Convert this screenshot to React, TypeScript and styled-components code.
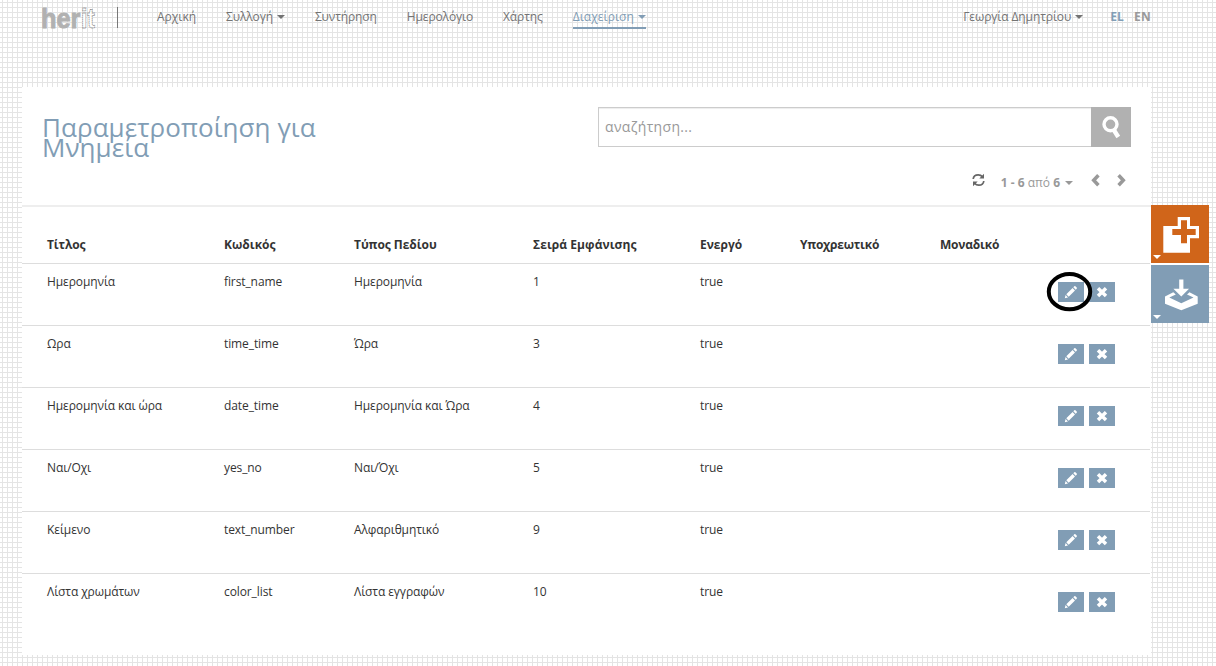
import React from "react";
import styled, { createGlobalStyle, css } from "styled-components";

const GlobalStyle = createGlobalStyle`
  *, *::before, *::after { box-sizing: border-box; }
  body {
    margin: 0;
    height: 666px;
    overflow: hidden;
    font: 12px/20px "Open Sans", "Noto Sans", sans-serif;
    color: #333;
    background-color: #fff;
    background-image:
      linear-gradient(to right, transparent 2px, #e4e4e4 2px, #e4e4e4 3px, transparent 3px),
      linear-gradient(to bottom, transparent 2px, #e4e4e4 2px, #e4e4e4 3px, transparent 3px);
    background-size: 5px 5px;
  }
`;

const BLUE = "#819db5";

const Page = styled.div`
  height: 666px;
  display: flex;
  flex-direction: column;
`;

const Header = styled.header`
  height: 87px;
  display: flex;
  align-items: flex-start;
  padding: 7px 65px 0 42px;
`;

const Logo = styled.svg`
  width: 54px;
  height: 22px;
  flex: none;
  overflow: visible;
  font-family: "Liberation Sans", Arial, sans-serif;
  font-weight: 700;
`;

const Divider = styled.div`
  width: 1px;
  height: 21px;
  margin-left: 21px;
  background: #777;
`;

const Nav = styled.nav`
  display: flex;
  gap: 30px;
  margin-left: 39px;
`;

const NavLink = styled.a<{ $active?: boolean; $tracking?: number }>`
  display: flex;
  align-items: center;
  height: 22px;
  line-height: 20px;
  padding-bottom: 2px;
  white-space: nowrap;
  letter-spacing: ${(p) => p.$tracking ?? -0.12}px;
  color: ${(p) => (p.$active ? BLUE : "#737373")};
  ${(p) => p.$active && css`border-bottom: 2px solid ${BLUE}; padding-bottom: 0;`}
`;

const Caret = styled.span`
  margin-left: 4px;
  border: 4px solid transparent;
  border-top-color: currentColor;
  border-bottom: 0;
`;

const UserArea = styled.div`
  display: flex;
  margin-left: auto;
`;

const Language = styled.a<{ $selected?: boolean; $gap: number }>`
  margin-left: ${(p) => p.$gap}px;
  font-weight: 700;
  letter-spacing: 0.2px;
  color: ${(p) => (p.$selected ? BLUE : "#999")};
`;

const Body = styled.main`
  display: flex;
  align-items: flex-start;
  padding-left: 22px;
`;

const Panel = styled.section`
  width: 1129px;
  height: 568px;
  background: #fff;
`;

const PanelHead = styled.div`
  height: 120px;
  display: flex;
  justify-content: space-between;
  padding: 20px 20px 0;
  border-bottom: 2px solid #eee;
`;

const Title = styled.h1`
  width: 340px;
  margin: 10px 0 0;
  font-size: 26px;
  font-weight: 400;
  line-height: 20px;
  letter-spacing: 0.07px;
  color: ${BLUE};
`;

const Tools = styled.div`
  width: 533px;
`;

const Search = styled.div`
  display: flex;
  height: 40px;
`;

const SearchInput = styled.input`
  flex: 1;
  min-width: 0;
  padding: 0 6px;
  border: 1px solid #ccc;
  border-right: 0;
  box-shadow: inset 0 1px 1px rgba(0, 0, 0, 0.075);
  font: 14px/20px "Open Sans", "Noto Sans", sans-serif;
  letter-spacing: 0.33px;
  outline: 0;
  &::placeholder { color: #999; opacity: 1; }
`;

const SearchButton = styled.button`
  width: 40px;
  height: 40px;
  padding: 0;
  border: 0;
  background: #b1b1b1;
  svg { display: block; }
`;

const Pager = styled.div`
  display: flex;
  justify-content: flex-end;
  height: 20px;
  margin-top: 26px;
  padding-right: 5px;
  color: #999;
`;

const PagerIcon = styled.svg<{ $left: number }>`
  flex: none;
  margin: 0 0 0 ${(p) => p.$left}px;
`;

const PagerText = styled.span`
  display: flex;
  align-items: center;
  margin-left: 16px;
  white-space: pre;
  ${Caret} { margin-left: 5px; }
`;

const Table = styled.table`
  width: 1128px;
  margin-top: 18px;
  table-layout: fixed;
  border-collapse: separate;
  border-spacing: 0;
`;

const HeadCell = styled.th<{ $tracking: number }>`
  height: 39px;
  padding: 10px 0 8px;
  border-bottom: 1px solid #ddd;
  text-align: left;
  vertical-align: top;
  font-weight: 700;
  letter-spacing: ${(p) => p.$tracking}px;
  &:first-child { padding-left: 25px; }
`;

const Row = styled.tr`
  height: 62px;
  &:not(:last-child) td { border-bottom: 1px solid #ddd; }
`;

const Cell = styled.td`
  padding: 8px 0;
  vertical-align: top;
  letter-spacing: -0.1px;
  &:first-child { padding-left: 25px; }
`;

const Actions = styled.div`
  display: flex;
  gap: 5px;
  margin-top: 10px;
`;

const ActionButton = styled.button`
  width: 26px;
  height: 20px;
  padding: 0;
  border: 0;
  background: ${BLUE};
  svg { display: block; }
`;

const EditSlot = styled.div`
  position: relative;
  display: flex;
`;

const Ring = styled.svg`
  position: absolute;
  left: -12px;
  top: -11px;
  z-index: 1;
`;

const Side = styled.aside`
  display: flex;
  flex-direction: column;
  gap: 2px;
  margin-top: 118px;
  background: #fff;
`;

const SideButton = styled.button<{ $color: string }>`
  width: 58px;
  height: 58px;
  padding: 0;
  border: 0;
  background: ${(p) => p.$color};
  svg { display: block; }
`;

const nav = [
  { label: "Αρχική", tracking: 0 },
  { label: "Συλλογή", menu: true },
  { label: "Συντήρηση" },
  { label: "Ημερολόγιο" },
  { label: "Χάρτης" },
  { label: "Διαχείριση", menu: true, active: true, tracking: 0.06 },
];

const columns = [
  { label: "Τίτλος", width: 202, tracking: -0.12 },
  { label: "Κωδικός", width: 130, tracking: 0 },
  { label: "Τύπος Πεδίου", width: 179, tracking: -0.04 },
  { label: "Σειρά Εμφάνισης", width: 167, tracking: 0.06 },
  { label: "Ενεργό", width: 100, tracking: 0 },
  { label: "Υποχρεωτικό", width: 140, tracking: -0.22 },
  { label: "Μοναδικό", width: 118, tracking: -0.2 },
  { label: "", width: 92, tracking: 0 },
];

const rows = [
  ["Ημερομηνία", "first_name", "Ημερομηνία", "1"],
  ["Ωρα", "time_time", "Ώρα", "3"],
  ["Ημερομηνία και ώρα", "date_time", "Ημερομηνία και Ώρα", "4"],
  ["Ναι/Οχι", "yes_no", "Ναι/Όχι", "5"],
  ["Κείμενο", "text_number", "Αλφαριθμητικό", "9"],
  ["Λίστα χρωμάτων", "color_list", "Λίστα εγγραφών", "10"],
];

const Pencil = () => (
  <svg width="26" height="20" viewBox="0 0 26 20" fill="#fff">
    <path d="M6.8 16.2l.8-3.200 2.400 2.400zM8.300 12.300l6.300-6.300 2.400 2.400-6.300 6.300zM15.300 5.300l1-1q.6-.5 1.100 0l1.300 1.300q.5.500 0 1.100l-1 1z" />
  </svg>
);

const Cross = () => (
  <svg width="26" height="20" viewBox="0 0 26 20">
    <path d="M9 6.200l8 7.800M17 6.200l-8 7.800" stroke="#fff" strokeWidth="3.500" />
  </svg>
);

export default function App() {
  return (
    <Page>
      <GlobalStyle />
      <Header>
        <Logo viewBox="0 0 54 22">
          <text x="-1" y="20.500" fontSize="27" textLength="39.500" lengthAdjust="spacingAndGlyphs" fill="#b1b1b1" stroke="#b1b1b1" strokeWidth=".9">her</text>
          <text x="39" y="20.500" fontSize="27" textLength="14" lengthAdjust="spacingAndGlyphs" fill="#fff" stroke="#8c8c8c" strokeWidth=".8" strokeDasharray="1.500 .5">it</text>
        </Logo>
        <Divider />
        <Nav>
          {nav.map((n) => (
            <NavLink key={n.label} $active={n.active} $tracking={n.tracking}>
              {n.label}
              {n.menu && <Caret />}
            </NavLink>
          ))}
        </Nav>
        <UserArea>
          <NavLink $tracking={-0.1}>Γεωργία Δημητρίου<Caret /></NavLink>
          <Language $selected $gap={27}>EL</Language>
          <Language $gap={10}>EN</Language>
        </UserArea>
      </Header>
      <Body>
        <Panel>
          <PanelHead>
            <Title>Παραμετροποίηση για Μνημεία</Title>
            <Tools>
              <Search>
                <SearchInput placeholder="αναζήτηση..." />
                <SearchButton aria-label="Αναζήτηση">
                  <svg width="40" height="40" fill="none" stroke="#fff">
                    <circle cx="19.500" cy="17.300" r="6.500" strokeWidth="3.400" />
                    <path d="M22.500 22.500l4.800 7.500" strokeWidth="4.400" />
                  </svg>
                </SearchButton>
              </Search>
              <Pager>
                <PagerIcon $left={0} width="13" height="14" viewBox="0 0 13 14" fill="none" stroke="#666" strokeWidth="1.700">
                  <path d="M1.200 6C1.500 3.200 3.800 1.800 6.200 1.800c2 0 3.300.8 4.200 2M11.800 8c-.3 2.800-2.600 4.200-5 4.200-2 0-3.300-.8-4.200-2" />
                  <path d="M12 .8v4.700H7.300zM1 13.200V8.500h4.700z" fill="#666" stroke="none" />
                </PagerIcon>
                <PagerText><b>1 - 6</b> από <b>6</b><Caret /></PagerText>
                <PagerIcon $left={18} width="9" height="14" viewBox="0 0 9 14" fill="none" stroke="#999" strokeWidth="3.500">
                  <path d="M7.400 2.200L2.700 7.200 7.400 12.200" />
                </PagerIcon>
                <PagerIcon $left={17} width="9" height="14" viewBox="0 0 9 14" fill="none" stroke="#999" strokeWidth="3.500">
                  <path d="M1.600 2.200L6.300 7.200 1.600 12.200" />
                </PagerIcon>
              </Pager>
            </Tools>
          </PanelHead>
          <Table>
            <colgroup>
              {columns.map((c, i) => <col key={i} width={c.width} />)}
            </colgroup>
            <thead>
              <tr>{columns.map((c, i) => <HeadCell key={i} $tracking={c.tracking}>{c.label}</HeadCell>)}</tr>
            </thead>
            <tbody>
              {rows.map((r, i) => (
                <Row key={r[1]}>
                  {r.map((v, j) => <Cell key={j}>{v}</Cell>)}
                  <Cell>true</Cell>
                  <Cell />
                  <Cell />
                  <Cell>
                    <Actions>
                      <EditSlot>
                        <ActionButton aria-label="Επεξεργασία"><Pencil /></ActionButton>
                        {i === 0 && (
                          <Ring width="47" height="41" fill="none">
                            <ellipse cx="23.500" cy="20.700" rx="20.700" ry="17.600" stroke="#000" strokeWidth="4" />
                          </Ring>
                        )}
                      </EditSlot>
                      <ActionButton aria-label="Διαγραφή"><Cross /></ActionButton>
                    </Actions>
                  </Cell>
                </Row>
              ))}
            </tbody>
          </Table>
        </Panel>
        <Side>
          <SideButton $color="#d0651a" aria-label="Προσθήκη">
            <svg width="58" height="58">
              <path fill="#fff" d="M12.300 21H26.700v-9H39v9h9v12.300h-9v14.400H12.300z" />
              <path fill="#d0651a" d="M30 15.300h6V24h8.700v6H36v8.300h-6V30h-8.700v-6H30z" />
              <path fill="#fff" d="M2 50h8l-4 4z" />
            </svg>
          </SideButton>
          <SideButton $color={BLUE} aria-label="Εξαγωγή">
            <svg width="58" height="58" fill="#fff">
              <path d="M28.200 14.500h4.200v9.200H38L30.300 31.500 22.400 23.700h5.800z" />
              <path d="M14 31.500l8.300-4.200 2.500 2.100-6.500 3.200 12 5.600 12.200-5.600-6.500-3.200 2.500-2.100 8.200 4.200v7.200L30.300 45.200 14 38.700z" />
              <path d="M2 50h8l-4 4z" />
            </svg>
          </SideButton>
        </Side>
      </Body>
    </Page>
  );
}
